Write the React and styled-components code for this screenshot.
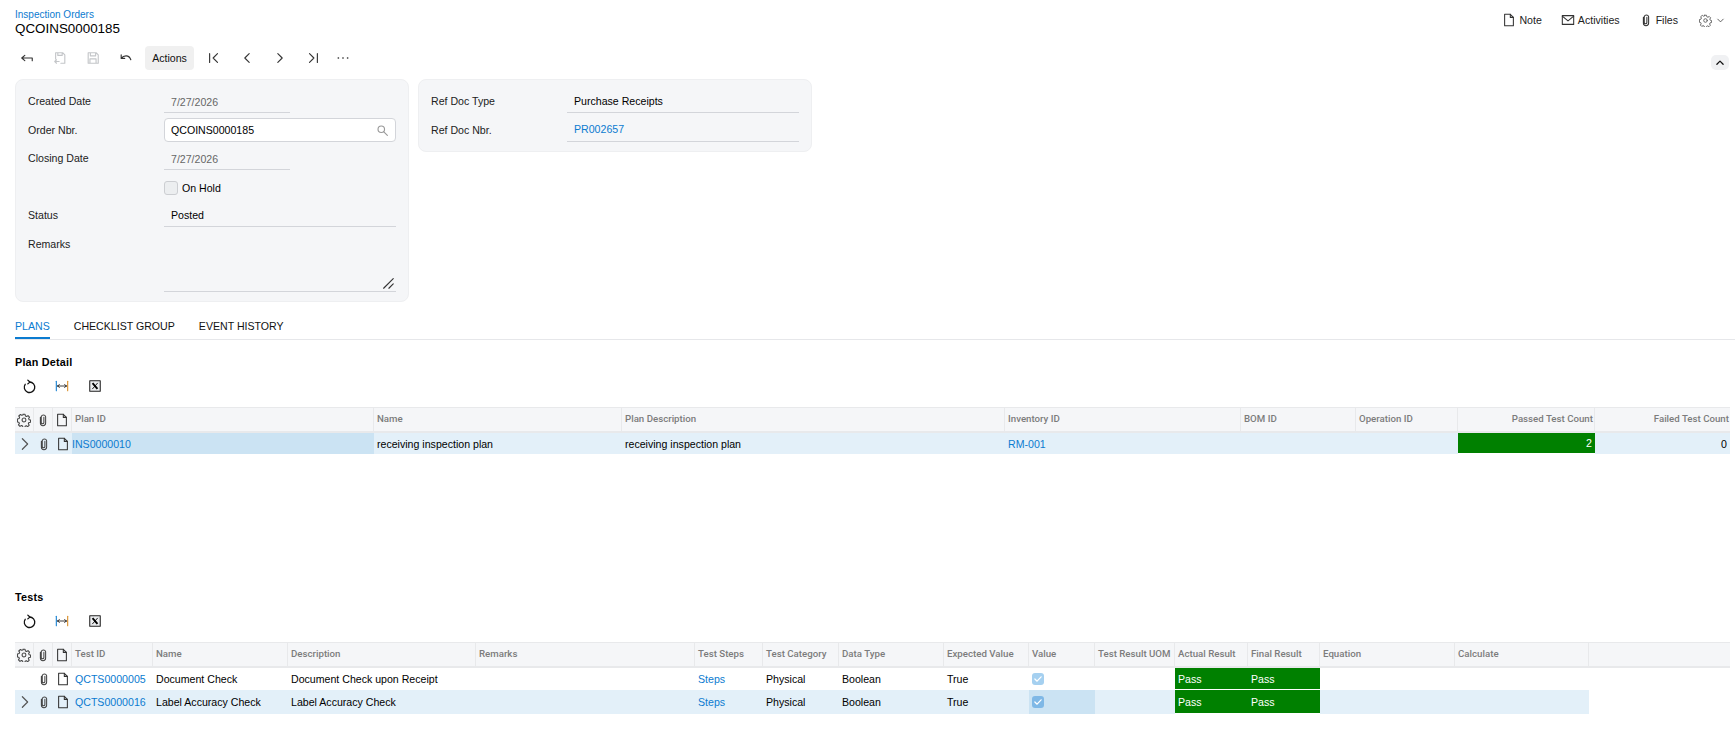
import React from 'react';
import styled, { createGlobalStyle } from 'styled-components';

const GlobalStyle = createGlobalStyle`
  html, body {
    margin: 0;
    padding: 0;
    background: #fff;
    color: #000;
    font-family: "Liberation Sans", Arial, sans-serif;
    font-size: 10.6px;
    overflow: hidden;
  }
`;

const Icon = ({ size = 16, color = '#333', width = 1.2, children }) => (
  <svg width={size} height={size} viewBox="0 0 16 16" fill="none" stroke={color} strokeWidth={width} strokeLinecap="round" strokeLinejoin="round">
    {children}
  </svg>
);

const NoteIcon = (props) => (
  <Icon {...props}>
    <path d="M3 1.5h6.5L13 5v9.5H3z" />
    <path d="M9.5 1.5V5H13" />
  </Icon>
);
const ClipIcon = (props) => (
  <Icon {...props}>
    <path d="M5 5v6.5a3 3 0 0 0 6 0V4.2a2.6 2.6 0 0 0-5 0v7a1.6 1.6 0 0 0 3 0V5" />
  </Icon>
);
const GearIcon = (props) => (
  <Icon {...props}>
    <circle cx="8" cy="8" r="2.2" />
    <path d="M6.8 1.5h2.4l.4 1.9 1.4.6 1.6-1 1.7 1.7-1 1.6.6 1.4 1.6.4v2.4l-1.9.4-.6 1.4 1 1.6-1.7 1.7-1.6-1-1.4.6-.4 1.6H6.8l-.4-1.9-1.4-.6-1.6 1-1.7-1.7 1-1.6-.6-1.4-1.6-.4V6.8l1.9-.4.6-1.4-1-1.6L4 1.7l1.6 1 1.4-.6z" />
  </Icon>
);
const MailIcon = () => (
  <Icon size={14}>
    <rect x="1.5" y="3" width="13" height="10" />
    <path d="M1.5 3.5 8 9l6.5-5.5" />
  </Icon>
);
const RefreshIcon = () => (
  <Icon size={15} color="#111" width={1.4}>
    <path d="M8 3.2a5.6 5.6 0 1 1-4.6 2.4" />
    <path d="M6.2 1.2 8.4 3.2 6.2 5.2" />
  </Icon>
);
const FitIcon = () => (
  <Icon size={14}>
    <path d="M1.5 2.5v11" stroke="#0b7bd0" />
    <path d="M14.5 2.5v11" stroke="#d98a1e" />
    <path d="M3 8h10M3 8l2-1.6M3 8l2 1.6M13 8l-2-1.6M13 8l-2 1.6" stroke="#222" strokeWidth="1" />
  </Icon>
);
const ExcelIcon = () => (
  <Icon size={14} color="#111">
    <rect x="2" y="2" width="12" height="12" fill="#eceef0" stroke="#222" />
    <path d="M5.2 4.800l5.600 6.400" strokeWidth="2.2" stroke="#000" strokeLinecap="butt" />
    <path d="M10.800 4.800l-5.600 6.400" strokeWidth="1" stroke="#000" />
  </Icon>
);
const SearchIcon = () => (
  <Icon size={13} color="#999" width={1.4}>
    <circle cx="6.5" cy="6.5" r="4" />
    <path d="M9.6 9.6 14 14" />
  </Icon>
);
const ChevronRight = () => (
  <Icon size={14} color="#555" width={1.4}>
    <path d="M5 2l6 6-6 6" />
  </Icon>
);

const tools = [
  { key: 'back', d: 'M2 8h12v3M2 8l3.5-3M2 8l3.5 3' },
  { key: 'saveback', faded: true, d: 'M3 2h8l2.5 2.5V14H9M3 2v7M5.5 2v3h5V2M2 12h5M2 12l2-2M2 12l2 2' },
  { key: 'save', faded: true, d: 'M2.5 2h9L14 4.500V14H2.500zM5 2v3.500h6V2M4.500 14V9h7v5' },
  { key: 'undo', d: 'M2.500 4.500v4h4M2.500 8.500C5 5 11.500 3.800 13.500 10' },
  { key: 'actions', label: 'Actions' },
  { key: 'first', d: 'M3 3v10M12 3 7 8l5 5' },
  { key: 'prev', d: 'M10.500 3l-5 5 5 5' },
  { key: 'next', d: 'M5.500 3l5 5-5 5' },
  { key: 'last', d: 'M13 3v10M4 3l5 5-5 5' },
  { key: 'more', d: 'M2.500 8h.4M7.800 8h.4M13.100 8h.4', heavy: true, nudge: -3 },
];

const Page = styled.div`
  width: 1735px;
  height: 730px;
  display: flex;
  flex-direction: column;
  overflow: hidden;
`;

const TopBar = styled.header`
  height: 38px;
  padding: 9px 15px 0;
  box-sizing: border-box;
  display: flex;
  justify-content: space-between;
`;

const Breadcrumb = styled.div`
  font-size: 10px;
  line-height: 11px;
  color: #0b7bd0;
`;

const Title = styled.h1`
  margin: 0;
  font-size: 13.4px;
  font-weight: 400;
  line-height: 18px;
`;

const TopActions = styled.div`
  display: flex;
  gap: 19px;
  margin-right: -6px;
  height: 22px;
  align-items: center;
`;

const TopAction = styled.span`
  display: flex;
  align-items: center;
  gap: 3px;
  color: #222;
`;

const SettingsAction = styled(TopAction)`
  margin-left: 2px;
`;

const ToolbarRow = styled.div`
  height: 41px;
  padding: 0 6px 0 10px;
  display: flex;
  align-items: flex-start;
  justify-content: space-between;
`;

const Tools = styled.div`
  display: flex;
  align-items: center;
  height: 24px;
  margin-top: 8px;
`;

const ToolButton = styled.button`
  width: 33px;
  height: 24px;
  margin-left: ${(p) => p.$nudge || 0}px;
  padding: 0;
  border: 0;
  background: none;
  display: flex;
  align-items: center;
  justify-content: center;
`;

const ActionsButton = styled.button`
  width: 49px;
  height: 24px;
  margin: 0 3px;
  padding: 0;
  border: 0;
  border-radius: 4px;
  background: #f0f0f0;
  color: #111;
  font: 10.6px "Liberation Sans", Arial, sans-serif;
`;

const Collapse = styled.button`
  width: 18px;
  height: 15px;
  margin: 17px 0 0;
  padding: 0;
  border: 0;
  border-radius: 5px;
  background: #f0f1f3;
  display: flex;
  align-items: center;
  justify-content: center;
`;

const Panels = styled.section`
  display: flex;
  align-items: flex-start;
  gap: 9px;
  padding: 0 15px;
`;

const Panel = styled.div`
  width: 394px;
  box-sizing: border-box;
  padding: ${(p) => p.$padding};
  background: #f5f6f8;
  border: 1px solid #eeeff1;
  border-radius: 8px;
  display: grid;
  grid-template-columns: 136px 232px;
`;

const Label = styled.div`
  height: ${(p) => p.$h}px;
  box-sizing: border-box;
  padding: ${(p) => (p.$top ? '10px 0 0' : `${p.$h - 19}px 0 0`)};
  line-height: 14px;
  color: #222;
`;

const Value = styled.div`
  height: ${(p) => p.$h}px;
  box-sizing: border-box;
  width: ${(p) => p.$w || 232}px;
  padding: ${(p) => p.$h - 19 + (p.$shift || 0)}px 7px 0;
  line-height: 14px;
  color: ${(p) => p.$color || '#000'};
  border-bottom: 1px solid #d3d5da;
`;

const SearchBox = styled.div`
  height: 24px;
  margin-top: 5px;
  box-sizing: border-box;
  padding: 0 6px;
  background: #fff;
  border: 1px solid #d3d5da;
  border-radius: 4px;
  display: flex;
  align-items: center;
  justify-content: space-between;
`;

const CheckRow = styled.label`
  height: 28px;
  display: flex;
  align-items: center;
  gap: 4px;
  padding-top: 7px;
  box-sizing: border-box;
`;

const Check = styled.span`
  width: 12px;
  height: 12px;
  border: 1px solid #ccced2;
  border-radius: 3px;
  background: #eceef0;
`;

const TextArea = styled.div`
  height: 65px;
  box-sizing: border-box;
  border-bottom: 1px solid #d3d5da;
  display: flex;
  align-items: flex-end;
  justify-content: flex-end;
  padding: 0 1px 1px 0;
`;

const Tabs = styled.nav`
  margin: 9px 0 0 15px;
  height: 28px;
  display: flex;
  gap: 24px;
  border-bottom: 1px solid #e6e7ea;
`;

const Tab = styled.div`
  height: 28px;
  box-sizing: border-box;
  padding-top: 8px;
  line-height: 14px;
  color: ${(p) => (p.$active ? '#0b7bd0' : '#111')};
  border-bottom: ${(p) => (p.$active ? '2px solid #0b7bd0' : '0')};
`;

const Section = styled.section`
  height: ${(p) => p.$h}px;
  padding-left: 15px;
`;

const SectionTitle = styled.h2`
  margin: 0;
  padding-top: 15px;
  font-size: 10.8px;
  font-weight: 700;
  line-height: 14px;
  letter-spacing: 0.2px;
`;

const GridTools = styled.div`
  display: flex;
  gap: 15px;
  padding-left: 5px;
  height: 34px;
  align-items: center;
  margin-bottom: 4px;
  box-sizing: border-box;
`;

const GridTool = styled.span`
  width: 18px;
  height: 18px;
  display: flex;
  align-items: center;
  justify-content: center;
`;

const Row = styled.div`
  display: grid;
  grid-template-columns: ${(p) => p.$cols};
  width: 1715px;
`;

const HeadRow = styled(Row)`
  height: 26px;
  box-sizing: border-box;
  background: #f5f6f8;
  border-top: 1px solid #e8e9eb;
  border-bottom: 2px solid #e8e9eb;
`;

const HeadCell = styled.div`
  display: flex;
  align-items: center;
  justify-content: ${(p) => (p.$right ? 'flex-end' : 'flex-start')};
  padding: 0 ${(p) => (p.$right ? 1 : 3)}px 2px 3px;
  overflow: hidden;
  white-space: nowrap;
  font-family: Roboto, sans-serif;
  font-size: 9.7px;
  font-weight: 500;
  color: #7c7c7c;
  border-right: 1px solid #e8e9eb;
  &:last-child {
    border-right: 0;
  }
`;

const IconHead = styled(HeadCell)`
  justify-content: center;
  padding: 0;
`;

const BodyRow = styled(Row)`
  height: ${(p) => p.$h}px;
  width: ${(p) => p.$w}px;
  background: ${(p) => (p.$selected ? '#e3f0f9' : '#fff')};
`;

const Cell = styled.div`
  display: flex;
  align-items: center;
  justify-content: ${(p) => (p.$right ? 'flex-end' : 'flex-start')};
  box-sizing: border-box;
  padding: 0 ${(p) => (p.$flush ? 0 : 3)}px;
  overflow: hidden;
  white-space: nowrap;
  color: ${(p) => (p.$pass ? '#fff' : p.$link ? '#0b7bd0' : '#000')};
  background: ${(p) => (p.$pass ? '#008000' : p.$active ? '#cbe3f3' : 'transparent')};
  border-bottom: ${(p) => (p.$pass ? '1px solid #fff' : '0')};
`;

const IconCell = styled(Cell)`
  justify-content: center;
  padding: 0;
`;

const ValueCheck = styled.span`
  width: 12px;
  height: 12px;
  border-radius: 3px;
  background: ${(p) => (p.$dark ? '#7fb8e6' : '#a5d0f0')};
  display: flex;
  align-items: center;
  justify-content: center;
`;

const planCols = '19px 19px 19px 302px 248px 383px 236px 115px 102px 137px 135px';
const planHead = ['Plan ID', 'Name', 'Plan Description', 'Inventory ID', 'BOM ID', 'Operation ID', 'Passed Test Count', 'Failed Test Count'];

const testCols = '19px 19px 19px 81px 135px 188px 219px 68px 76px 105px 85px 66px 80px 73px 72px 135px 134px 141px';
const testHead = ['Test ID', 'Name', 'Description', 'Remarks', 'Test Steps', 'Test Category', 'Data Type', 'Expected Value', 'Value', 'Test Result UOM', 'Actual Result', 'Final Result', 'Equation', 'Calculate', ''];

const tests = [
  { id: 'QCTS0000005', name: 'Document Check', desc: 'Document Check upon Receipt', h: 22 },
  { id: 'QCTS0000016', name: 'Label Accuracy Check', desc: 'Label Accuracy Check', h: 24, selected: true },
];

const GridHeader = ({ cols, titles, rightFrom }) => (
  <HeadRow $cols={cols}>
    <IconHead><GearIcon size={14} color="#444" /></IconHead>
    <IconHead><ClipIcon size={14} color="#444" /></IconHead>
    <IconHead><NoteIcon size={14} color="#333" /></IconHead>
    {titles.map((t, i) => (
      <HeadCell key={t + i} $right={rightFrom !== undefined && i >= rightFrom}>{t}</HeadCell>
    ))}
  </HeadRow>
);

const GridButtons = () => (
  <GridTools>
    <GridTool><RefreshIcon /></GridTool>
    <GridTool><FitIcon /></GridTool>
    <GridTool><ExcelIcon /></GridTool>
  </GridTools>
);

export default function App() {
  return (
    <>
      <GlobalStyle />
      <Page>
        <TopBar>
          <div>
            <Breadcrumb>Inspection Orders</Breadcrumb>
            <Title>QCOINS0000185</Title>
          </div>
          <TopActions>
            <TopAction><NoteIcon size={14} />Note</TopAction>
            <TopAction><MailIcon />Activities</TopAction>
            <TopAction><ClipIcon size={14} />Files</TopAction>
            <SettingsAction>
              <GearIcon size={13} color="#666" />
              <Icon size={11} color="#444"><path d="M4 6l4 4 4-4" /></Icon>
            </SettingsAction>
          </TopActions>
        </TopBar>

        <ToolbarRow>
          <Tools>
            {tools.map((t) =>
              t.label ? (
                <ActionsButton key={t.key}>{t.label}</ActionsButton>
              ) : (
                <ToolButton key={t.key} $nudge={t.nudge}>
                  <Icon size={14} color={t.faded ? '#c4c6c9' : '#333'} width={t.heavy ? 1.6 : 1.3}>
                    <path d={t.d} />
                  </Icon>
                </ToolButton>
              )
            )}
          </Tools>
          <Collapse>
            <Icon size={10} color="#111" width={2}><path d="M3 10l5-5 5 5" /></Icon>
          </Collapse>
        </ToolbarRow>

        <Panels>
          <Panel $padding="5px 13px 9px 12px">
            <Label $h={28}>Created Date</Label>
            <Value $h={28} $w={126} $shift={1} $color="#666">7/27/2026</Value>
            <Label $h={29}>Order Nbr.</Label>
            <SearchBox>QCOINS0000185<SearchIcon /></SearchBox>
            <Label $h={28}>Closing Date</Label>
            <Value $h={28} $w={126} $shift={1} $color="#666">7/27/2026</Value>
            <Label $h={28} />
            <CheckRow><Check />On Hold</CheckRow>
            <Label $h={29}>Status</Label>
            <Value $h={29}>Posted</Value>
            <Label $h={65} $top>Remarks</Label>
            <TextArea>
              <Icon size={14} color="#333" width={1.3}><path d="M3 14 14 3M9 14l5-5" /></Icon>
            </TextArea>
          </Panel>
          <Panel $padding="5px 13px 9px 12px">
            <Label $h={28}>Ref Doc Type</Label>
            <Value $h={28}>Purchase Receipts</Value>
            <Label $h={29}>Ref Doc Nbr.</Label>
            <Value $h={29} $shift={-1} $color="#0b7bd0">PR002657</Value>
          </Panel>
        </Panels>

        <Tabs>
          <Tab $active>PLANS</Tab>
          <Tab>CHECKLIST GROUP</Tab>
          <Tab>EVENT HISTORY</Tab>
        </Tabs>

        <Section $h={235}>
          <SectionTitle>Plan Detail</SectionTitle>
          <GridButtons />
          <GridHeader cols={planCols} titles={planHead} rightFrom={6} />
          <BodyRow $cols={planCols} $h={21} $w={1715} $selected>
            <IconCell><ChevronRight /></IconCell>
            <IconCell><ClipIcon size={14} color="#444" /></IconCell>
            <IconCell><NoteIcon size={14} /></IconCell>
            <Cell $link $active $flush>INS0000010</Cell>
            <Cell>receiving inspection plan</Cell>
            <Cell>receiving inspection plan</Cell>
            <Cell $link>RM-001</Cell>
            <Cell />
            <Cell />
            <Cell $pass $right>2</Cell>
            <Cell $right>0</Cell>
          </BodyRow>
        </Section>

        <Section $h={140}>
          <SectionTitle>Tests</SectionTitle>
          <GridButtons />
          <GridHeader cols={testCols} titles={testHead} />
          {tests.map((t) => (
            <BodyRow key={t.id} $cols={testCols} $h={t.h} $w={1574} $selected={t.selected}>
              <IconCell>{t.selected && <ChevronRight />}</IconCell>
              <IconCell><ClipIcon size={14} color="#444" /></IconCell>
              <IconCell><NoteIcon size={14} /></IconCell>
              <Cell $link>{t.id}</Cell>
              <Cell>{t.name}</Cell>
              <Cell>{t.desc}</Cell>
              <Cell />
              <Cell $link>Steps</Cell>
              <Cell>Physical</Cell>
              <Cell>Boolean</Cell>
              <Cell>True</Cell>
              <Cell $active={t.selected}>
                <ValueCheck $dark={t.selected}>
                  <Icon size={10} color="#fff" width={2}><path d="M3 8l3.500 3.500L13 4.500" /></Icon>
                </ValueCheck>
              </Cell>
              <Cell />
              <Cell $pass>Pass</Cell>
              <Cell $pass>Pass</Cell>
              <Cell />
              <Cell />
            </BodyRow>
          ))}
        </Section>
      </Page>
    </>
  );
}
